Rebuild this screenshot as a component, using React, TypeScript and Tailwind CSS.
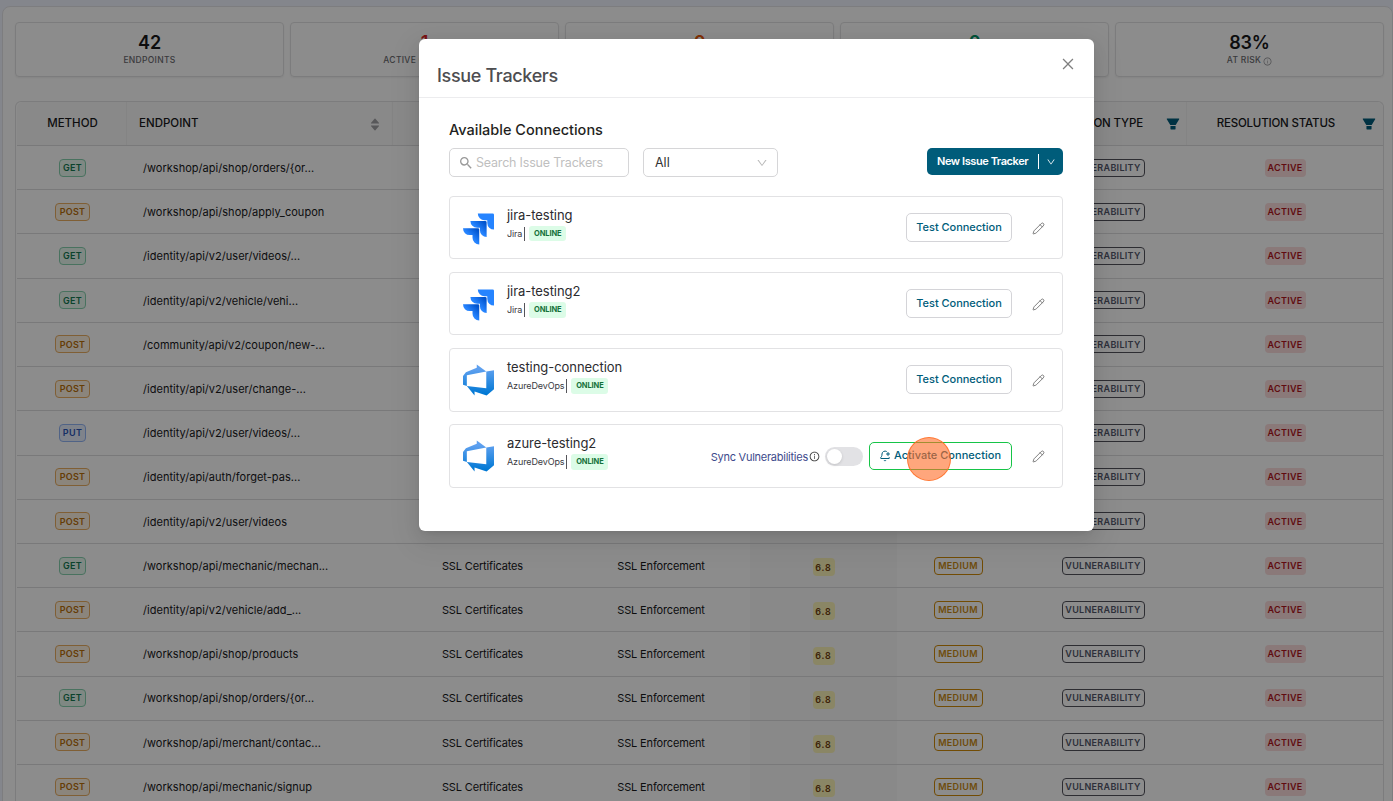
import { AiFillCaretDown, AiFillCaretUp, AiFillFilter, AiOutlineClose, AiOutlineDown, AiOutlineInfoCircle } from "react-icons/ai";
import { MdSearch } from "react-icons/md";
import { BellPlus, Pencil } from "lucide-react";
import clsx from "clsx";

type Method = "GET" | "POST" | "PUT";

type Row = {
  method: Method;
  path: string;
  category?: string;
  subcategory?: string;
  score?: string;
  severity?: string;
};

const ssl = { category: "SSL Certificates", subcategory: "SSL Enforcement", score: "6.8", severity: "MEDIUM" };

const rows: Row[] = [
  { method: "GET", path: "/workshop/api/shop/orders/{or..." },
  { method: "POST", path: "/workshop/api/shop/apply_coupon" },
  { method: "GET", path: "/identity/api/v2/user/videos/..." },
  { method: "GET", path: "/identity/api/v2/vehicle/vehi..." },
  { method: "POST", path: "/community/api/v2/coupon/new-..." },
  { method: "POST", path: "/identity/api/v2/user/change-..." },
  { method: "PUT", path: "/identity/api/v2/user/videos/..." },
  { method: "POST", path: "/identity/api/auth/forget-pas..." },
  { method: "POST", path: "/identity/api/v2/user/videos" },
  { method: "GET", path: "/workshop/api/mechanic/mechan...", ...ssl },
  { method: "POST", path: "/identity/api/v2/vehicle/add_...", ...ssl },
  { method: "POST", path: "/workshop/api/shop/products", ...ssl },
  { method: "GET", path: "/workshop/api/shop/orders/{or...", ...ssl },
  { method: "POST", path: "/workshop/api/merchant/contac...", ...ssl },
  { method: "POST", path: "/workshop/api/mechanic/signup", ...ssl },
];

const stats = [
  { value: "42", label: "ENDPOINTS", color: "text-[#18181b]" },
  { value: "1", label: "ACTIVE CRITICALS", color: "text-[#dc2626]" },
  { value: "0", label: "", color: "text-[#ea580c]" },
  { value: "0", label: "", color: "text-[#059669]" },
  { value: "83%", label: "AT RISK", color: "text-[#18181b]", info: true },
];

const methodStyles: Record<Method, string> = {
  GET: "w-[27px] border-[#86cfae] bg-[#e8f7ef] text-[#147a52]",
  POST: "w-[35px] border-[#e9ad62] bg-[#fdf3e2] text-[#b96f0a]",
  PUT: "w-[27px] border-[#93b4f5] bg-[#e7effe] text-[#2954b8]",
};

const columns = "grid grid-cols-[110px_266px_178px_179px_147px_122px_168px_1fr]";
const badge = "flex h-[18px] items-center justify-center rounded-[4px] text-[9px] font-semibold";

const trackers = [
  { name: "jira-testing", kind: "Jira" },
  { name: "jira-testing2", kind: "Jira" },
  { name: "testing-connection", kind: "AzureDevOps" },
  { name: "azure-testing2", kind: "AzureDevOps", pending: true },
];

function JiraLogo() {
  return (
    <svg viewBox="0 0 24 24" className="mt-[2px] h-8 w-[31px]">
      <defs>
        <linearGradient id="jira-fade" x1="0.95" y1="0.05" x2="0.4" y2="0.6">
          <stop offset="0.1" stopColor="#0052cc" />
          <stop offset="0.85" stopColor="#2684ff" />
        </linearGradient>
      </defs>
      <path fill="#2684ff" d="M23.013 0H11.455a5.215 5.215 0 0 0 5.215 5.215h2.129v2.057A5.215 5.215 0 0 0 24 12.483V1.005A1.001 1.001 0 0 0 23.013 0Z" />
      <path fill="url(#jira-fade)" d="M17.294 5.757H5.736a5.215 5.215 0 0 0 5.215 5.214h2.129v2.058a5.218 5.218 0 0 0 5.215 5.214V6.758a1.001 1.001 0 0 0-1.001-1.001z" />
      <path fill="url(#jira-fade)" d="M11.571 11.513H0a5.218 5.218 0 0 0 5.232 5.215h2.13v2.057A5.215 5.215 0 0 0 12.575 24V12.518a1.005 1.005 0 0 0-1.005-1.005z" />
    </svg>
  );
}

function AzureLogo() {
  return (
    <svg viewBox="0 0 24 24" className="h-8 w-[31px]">
      <defs>
        <linearGradient id="azure-fade" x1="0" y1="0" x2="0" y2="1">
          <stop offset="0.15" stopColor="#5ea0ef" />
          <stop offset="0.95" stopColor="#0078d4" />
        </linearGradient>
      </defs>
      <path
        fill="url(#azure-fade)"
        d="M0 8.877L2.247 5.91l8.405-3.416V.022l7.37 5.393L2.966 8.338v8.225L0 15.707zm24-4.45v14.651l-5.753 4.9-9.303-3.057v3.056l-5.978-7.416 15.057 1.798V5.415z"
      />
    </svg>
  );
}

function StatCards() {
  return (
    <div className="grid h-[55px] grid-cols-5 gap-[6px]">
      {stats.map((s, i) => (
        <div key={i} className="flex flex-col items-center rounded-[4px] border border-[#e2e2e4] pt-2 shadow-[0_1px_2px_rgba(0,0,0,0.06)]">
          <div className={clsx("text-[18px] font-semibold leading-[23px] tracking-[-0.2px]", s.color)}>{s.value}</div>
          <div className="flex items-center gap-[2px] text-[8.5px] font-medium leading-3 tracking-[0.3px] text-[#6b6b70]">
            {s.label}
            {s.info && <AiOutlineInfoCircle className="mt-[2px] h-[9px] w-[9px] text-[#8b8b90]" />}
          </div>
        </div>
      ))}
    </div>
  );
}

function EndpointTable() {
  return (
    <div className="mt-6 rounded-t-[6px] border border-b-0 border-[#e2e2e4] pl-px">
      <div className={clsx(columns, "h-11 rounded-t-[6px] border-b border-[#dcdcde] bg-[#fafafa] text-[11.5px] font-medium text-[#18181b]")}>
        <div className="flex items-center justify-center border-r border-[#f0f0f0] pl-[2px] pt-px">METHOD</div>
        <div className="flex items-center justify-between border-r border-[#f0f0f0] px-3 pt-px">
          <span>ENDPOINT</span>
          <span className="mr-[-1px] flex flex-col items-center text-[#a0a0a4]">
            <AiFillCaretUp className="-mb-[5px] h-[12px] w-[12px]" />
            <AiFillCaretDown className="h-[12px] w-[12px]" />
          </span>
        </div>
        <div className="border-r border-[#f0f0f0]" />
        <div className="border-r border-[#f0f0f0]" />
        <div className="border-r border-[#f0f0f0]" />
        <div className="border-r border-[#f0f0f0]" />
        <div className="flex items-center justify-end border-r border-[#f0f0f0] pr-[5px] pt-px">
          <span className="mr-[22px] whitespace-nowrap tracking-[-0.15px]">RESOLUTION TYPE</span>
          <AiFillFilter className="h-[16px] w-[16px] shrink-0 text-[#005c7a]" />
        </div>
        <div className="flex items-center justify-end pr-[6px] pt-px">
          <span className="mr-[26px] whitespace-nowrap tracking-[-0.18px]">RESOLUTION STATUS</span>
          <AiFillFilter className="h-[16px] w-[16px] shrink-0 text-[#005c7a]" />
        </div>
      </div>
      {rows.map((row, i) => (
        <div key={i} className={clsx(columns, "h-[44.22px] border-b border-[#dcdcde] text-[11px] text-[#18181b]")}>
          <div className="flex items-center justify-center pl-px">
            <span className={clsx(badge, "border tracking-[0.3px]", methodStyles[row.method])}>{row.method}</span>
          </div>
          <div className="flex items-center whitespace-nowrap pl-4 pt-px tracking-[0.03px]">{row.path}</div>
          <div className="flex items-center justify-center pl-px pt-px tracking-[-0.15px]">{row.category}</div>
          <div className="flex items-center justify-center pl-px pt-px tracking-[-0.15px]">{row.subcategory}</div>
          <div className="flex items-center justify-center bg-[#fafafa] pt-[3px]">
            {row.score && <span className={clsx(badge, "w-[22px] bg-[#fbf5b8] pt-px tracking-[0.9px] text-[#713f12]")}>{row.score}</span>}
          </div>
          <div className="flex items-center justify-center">
            {row.severity && (
              <span className={clsx(badge, "w-[49px] border border-[#cf8a08] tracking-[0.3px] text-[#c98a14]")}>{row.severity}</span>
            )}
          </div>
          <div className="flex items-center justify-center">
            <span className={clsx(badge, "w-[83px] border border-[#52525b] tracking-[0.3px] text-[#52566a]")}>VULNERABILITY</span>
          </div>
          <div className="flex items-center justify-center">
            <span className={clsx(badge, "w-[41px] bg-[#fbdcdc] tracking-[0.3px] text-[#b0141c]")}>ACTIVE</span>
          </div>
        </div>
      ))}
    </div>
  );
}

function TrackerCard({ name, kind, pending }: { name: string; kind: string; pending?: boolean }) {
  return (
    <div className="flex h-[63.4px] items-center rounded-[4px] border border-[#e2e2e4] pl-[13px] pr-[17px]">
      {kind === "Jira" ? <JiraLogo /> : <AzureLogo />}
      <div className="ml-[13px] mt-[-8px] flex-1">
        <div className="text-[13px] leading-[18px] tracking-[-0.05px] text-[#2b2b2f]">{name}</div>
        <div className="mt-[2px] flex items-center text-[9px] leading-4 tracking-[-0.12px] text-[#3a3a3f]">
          {kind}
          <span className="ml-[2px] mr-1 h-[14px] w-px shrink-0 bg-[#55555a]" />
          <span className="flex h-[15.5px] w-[37px] items-center justify-center rounded-[3px] bg-[#dcfce7] text-[7.5px] font-bold tracking-[-0.1px] text-[#15713a]">
            ONLINE
          </span>
        </div>
      </div>
      {pending ? (
        <>
          <span className="pt-[2px] text-[11px] tracking-[-0.25px] text-[#3d4a8c]">Sync Vulnerabilities</span>
          <AiOutlineInfoCircle className="ml-px mt-px h-[11px] w-[11px] text-[#333]" />
          <span className="ml-[5px] mt-px flex h-[19px] w-[38px] items-center rounded-full bg-[#e2e2e5] pl-[2px]">
            <span className="h-[15px] w-[15px] rounded-full bg-white shadow-[0_1px_3px_rgba(0,0,0,0.15)]" />
          </span>
          <button className="relative ml-[6px] flex h-7 w-[143px] items-center rounded-[5px] border border-[#16c447] pl-[9px] text-[11px] font-medium tracking-[0.02px] text-[#005c7a]">
            <BellPlus className="mr-[3px] mt-px h-3 w-3" strokeWidth={2} />
            <span className="whitespace-nowrap pb-px">Activate Connection</span>
            <span className="absolute left-[36.5px] top-[-6px] h-11 w-11 rounded-full border border-[#ff6a1f]/80 bg-[#ff6b24]/60" />
          </button>
        </>
      ) : (
        <button className="flex h-[29px] w-[106px] items-center justify-center rounded-[5px] border border-[#d4d4d8] pb-px text-[11px] font-medium tracking-[-0.03px] text-[#005c7a]">
          Test Connection
        </button>
      )}
      <Pencil className="ml-5 mt-px h-[13px] w-[13px] text-[#6b6b6b]" strokeWidth={1.6} />
    </div>
  );
}

function IssueTrackersModal() {
  return (
    <div className="h-[492px] w-[675px] rounded-[6px] bg-white shadow-[0_6px_16px_0_rgba(0,0,0,0.08),0_3px_6px_-4px_rgba(0,0,0,0.12),0_9px_28px_8px_rgba(0,0,0,0.05)]">
      <div className="flex h-[59px] items-start justify-between border-b border-[#ececee] pl-[18px] pr-[18px]">
        <h2 className="mt-[25px] text-[18px] font-medium leading-6 tracking-[-0.34px] text-[#4d4d50]">Issue Trackers</h2>
        <AiOutlineClose className="mt-[17px] h-4 w-4 text-[#808080]" />
      </div>
      <div className="pl-[30px] pr-[31px] pt-[22px]">
        <h3 className="text-[14.5px] font-medium leading-[20px] text-[#1f1f22]">Available Connections</h3>
        <div className="mt-2 flex items-start">
          <div className="flex h-[29px] w-[180px] items-center rounded-[5px] border border-[#d6d6d8] pl-[8px] text-[12.5px] tracking-[-0.2px] text-[#bfbfbf]">
            <MdSearch className="mr-[2px] h-4 w-4 text-[#999]" />
            <span className="pt-px">Search Issue Trackers</span>
          </div>
          <div className="ml-[14px] flex h-[29px] w-[135px] items-center justify-between rounded-[5px] border border-[#d6d6d8] pl-[11px] pr-[9px] text-[12.5px] text-[#333]">
            <span className="pt-px">All</span>
            <AiOutlineDown className="h-3 w-3 text-[#b8b8b8]" />
          </div>
          <button className="ml-auto flex h-[27px] w-[136px] items-center rounded-[5px] bg-[#005c7a] pl-[10px] text-[11px] font-semibold tracking-[-0.42px] text-white">
            <span className="whitespace-nowrap">New Issue Tracker</span>
            <span className="ml-auto h-[15px] w-px bg-white" />
            <AiOutlineDown className="ml-[7px] mr-[7px] h-[10px] w-[10px]" />
          </button>
        </div>
        <div className="mt-[19px] flex flex-col gap-[12.7px]">
          {trackers.map((t) => (
            <TrackerCard key={t.name} {...t} />
          ))}
        </div>
      </div>
    </div>
  );
}

export default function App() {
  return (
    <div className="relative h-[801px] w-full overflow-hidden bg-[#f1f4ff] pl-[2px] pt-[6px] font-['Inter',sans-serif]">
      <main className="h-[820px] rounded-t-lg border border-[#e4e4e8] bg-white pl-3 pr-2 pt-[15px]">
        <StatCards />
        <EndpointTable />
      </main>
      <div className="absolute inset-0 flex items-start bg-black/45 pl-[419px] pt-[39px]">
        <IssueTrackersModal />
      </div>
    </div>
  );
}
